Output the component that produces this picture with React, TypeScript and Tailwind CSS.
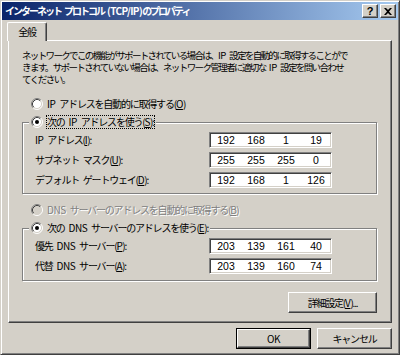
import React from 'react';

// en space keeps the word gap visible under negative tracking
const S = '\u2002';

// latin runs get less squeeze than the kana
const L = ({ children }: { children: React.ReactNode }) => (
  <span className="tracking-[-0.4px]">{children}</span>
);

const Radio = ({ checked, disabled }: { checked?: boolean; disabled?: boolean }) => (
  <svg width="12" height="12" viewBox="0 0 12 12" className="shrink-0">
    <circle cx="6" cy="6" r="5" fill={disabled ? '#d4d0c8' : '#ffffff'} />
    <path d="M2.11 9.89 A5.5 5.5 0 0 1 9.89 2.11" fill="none" stroke="#808080" />
    <path d="M9.89 2.11 A5.5 5.5 0 0 1 2.11 9.89" fill="none" stroke="#ffffff" />
    <path d="M2.82 9.18 A4.5 4.5 0 0 1 9.18 2.82" fill="none" stroke="#404040" />
    <path d="M9.18 2.82 A4.5 4.5 0 0 1 2.82 9.18" fill="none" stroke="#d4d0c8" />
    {checked && <circle cx="6" cy="6" r="2" fill={disabled ? '#808080' : '#000000'} />}
  </svg>
);

const IpField = ({ parts }: { parts: string[] }) => (
  <div className="w-[123px] h-[16px] bg-white border border-t-[#808080] border-l-[#808080] border-r-white border-b-white shadow-[inset_1px_1px_0_#404040,inset_-1px_-1px_0_#d4d0c8] grid grid-cols-4 pl-[1px] font-['Liberation_Sans',sans-serif] text-[10.5px] leading-[14px] tracking-normal">
    {parts.map((p, i) => (
      <span key={i} className="text-center">{p}</span>
    ))}
  </div>
);

const Btn = ({ children, def, className }: { children: React.ReactNode; def?: boolean; className?: string }) => (
  <div className={`${className} ${def ? 'border border-black' : ''}`}>
    <div className="w-full h-full flex items-center justify-center bg-[#d4d0c8] border border-t-white border-l-white border-r-[#404040] border-b-[#404040] shadow-[inset_-1px_-1px_0_#808080]">
      {children}
    </div>
  </div>
);

const Row = ({ label, k, parts }: { label: React.ReactNode; k: string; parts: string[] }) => (
  <div className="flex items-center h-[16px] pl-[12px]">
    <span className="w-[174px] whitespace-nowrap">
      {label}(<u><L>{k}</L></u>):
    </span>
    <IpField parts={parts} />
  </div>
);

export default function App() {
  return (
    <div className="w-[400px] h-[355px] bg-[#d4d0c8] border border-t-[#d4d0c8] border-l-[#d4d0c8] border-r-[#404040] border-b-[#404040] shadow-[inset_1px_1px_0_#fff,inset_-1px_-1px_0_#808080] p-[1px] flex flex-col font-['Noto_Sans_CJK_JP',sans-serif] text-[10px] leading-[12px] tracking-[-1.2px] text-black">
      {/* title bar */}
      <div className="h-[18px] flex items-center justify-between bg-[linear-gradient(to_right,#0a246a,#a6caf0)] pl-[3px] pr-[2px]">
        <span className="text-white font-bold text-[10px] tracking-[-2px] whitespace-nowrap">
          インターネット{S}プロトコル{S}<span className="tracking-[-0.6px]">(TCP/IP)</span>のプロパティ
        </span>
        <div className="flex gap-[2px]">
          <Btn className="w-[16px] h-[14px]">
            <span className="font-['Liberation_Sans',sans-serif] font-bold text-[11px] leading-[10px] tracking-normal">?</span>
          </Btn>
          <Btn className="w-[16px] h-[14px]">
            <svg width="8" height="7" viewBox="0 0 8 7">
              <path d="M0 0 L2 0 L4 2 L6 0 L8 0 L5 3.5 L8 7 L6 7 L4 5 L2 7 L0 7 L3 3.5 Z" fill="#000" />
            </svg>
          </Btn>
        </div>
      </div>

      {/* tab */}
      <div className="mt-[2px] ml-[5px] relative z-10 -mb-[1px] w-[40px] h-[19px] bg-[#d4d0c8] border-t border-l border-t-white border-l-white border-r border-r-[#404040] shadow-[inset_-1px_0_0_#808080] rounded-tl-[2px] rounded-tr-[2px] flex items-center justify-center pb-[1px]">
        全般
      </div>

      {/* panel */}
      <div className="ml-[6px] w-[384px] h-[283px] border border-t-white border-l-white border-r-[#404040] border-b-[#404040] shadow-[inset_-1px_-1px_0_#808080] pl-[13px] pt-[8px] flex flex-col">
        <div className="whitespace-nowrap text-[9.5px]">
          <div className="tracking-[-1.65px]">ネットワークでこの機能がサポートされている場合は、<L>IP</L>{S}設定を自動的に取得することがで</div>
          <div className="tracking-[-1.6px]">きます。サポートされていない場合は、ネットワーク管理者に適切な{S}<L>IP</L>{S}設定を問い合わせ</div>
          <div className="tracking-[-1.5px]">てください。</div>
        </div>

        <div className="mt-[12px] h-[14px] flex items-center gap-[4px] pl-[9px] whitespace-nowrap">
          <Radio />
          <span><L>IP</L>{S}アドレスを自動的に取得する(<u><L>O</L></u>)</span>
        </div>

        <div className="mt-[11px] w-[355px] h-[72px] border border-[#808080] shadow-[1px_1px_0_#fff,inset_1px_1px_0_#fff] flex flex-col">
          <div className="-mt-[8px] ml-[6px] w-fit h-[14px] bg-[#d4d0c8] px-[2px] flex items-center gap-[4px] whitespace-nowrap">
            <Radio checked />
            <span className="outline-1 outline-dotted outline-black">次の{S}<L>IP</L>{S}アドレスを使う(<u><L>S</L></u>):</span>
          </div>
          <div className="mt-[3px] flex flex-col gap-[4px]">
            <Row label={<><L>IP</L>{S}アドレス</>} k="I" parts={['192', '168', '1', '19']} />
            <Row label={`サブネット${S}マスク`} k="U" parts={['255', '255', '255', '0']} />
            <Row label={`デフォルト${S}ゲートウェイ`} k="D" parts={['192', '168', '1', '126']} />
          </div>
        </div>

        <div className="mt-[9px] h-[14px] flex items-center gap-[4px] pl-[9px] whitespace-nowrap text-[#808080] [text-shadow:1px_1px_0_#fff]">
          <Radio disabled />
          <span><L>DNS</L>{S}サーバーのアドレスを自動的に取得する(<u><L>B</L></u>)</span>
        </div>

        <div className="mt-[11px] w-[355px] h-[53px] border border-[#808080] shadow-[1px_1px_0_#fff,inset_1px_1px_0_#fff] flex flex-col">
          <div className="-mt-[8px] ml-[6px] w-fit h-[14px] bg-[#d4d0c8] px-[2px] flex items-center gap-[4px] whitespace-nowrap">
            <Radio checked />
            <span>次の{S}<L>DNS</L>{S}サーバーのアドレスを使う(<u><L>E</L></u>):</span>
          </div>
          <div className="mt-[3px] flex flex-col gap-[4px]">
            <Row label={<>優先{S}<L>DNS</L>{S}サーバー</>} k="P" parts={['203', '139', '161', '40']} />
            <Row label={<>代替{S}<L>DNS</L>{S}サーバー</>} k="A" parts={['203', '139', '160', '74']} />
          </div>
        </div>

        <div className="mt-[11px] self-end mr-[14px]">
          <Btn className="w-[89px] h-[21px]">
            <span>詳細設定(<u><L>V</L></u>)...</span>
          </Btn>
        </div>
      </div>

      {/* bottom buttons */}
      <div className="mt-[5px] flex justify-end gap-[6px] pr-[6px]">
        <Btn def className="w-[75px] h-[21px]">
          <L>OK</L>
        </Btn>
        <Btn className="w-[75px] h-[21px]">
          <span>キャンセル</span>
        </Btn>
      </div>
    </div>
  );
}
